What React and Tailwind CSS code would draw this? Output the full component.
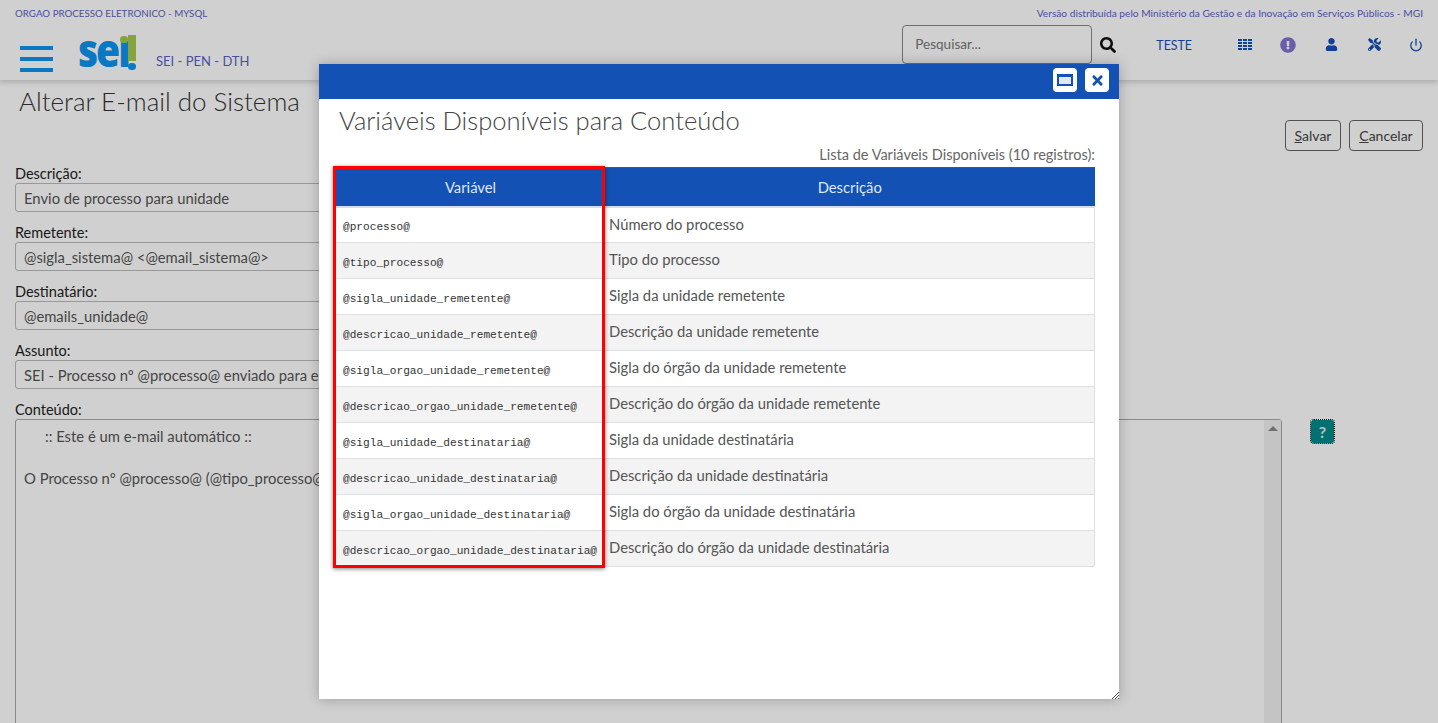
import React from 'react';
import { FaSearch, FaExclamationCircle, FaUser, FaTools, FaTimes } from 'react-icons/fa';
import { Power } from 'lucide-react';

const variaveis = [
    ['@processo@', 'Número do processo'],
    ['@tipo_processo@', 'Tipo do processo'],
    ['@sigla_unidade_remetente@', 'Sigla da unidade remetente'],
    ['@descricao_unidade_remetente@', 'Descrição da unidade remetente'],
    ['@sigla_orgao_unidade_remetente@', 'Sigla do órgão da unidade remetente'],
    ['@descricao_orgao_unidade_remetente@', 'Descrição do órgão da unidade remetente'],
    ['@sigla_unidade_destinataria@', 'Sigla da unidade destinatária'],
    ['@descricao_unidade_destinataria@', 'Descrição da unidade destinatária'],
    ['@sigla_orgao_unidade_destinataria@', 'Sigla do órgão da unidade destinatária'],
    ['@descricao_orgao_unidade_destinataria@', 'Descrição do órgão da unidade destinatária'],
];

const campos = [
    ['Descrição:', 'Envio de processo para unidade'],
    ['Remetente:', '@sigla_sistema@ <@email_sistema@>'],
    ['Destinatário:', '@emails_unidade@'],
    ['Assunto:', 'SEI - Processo nº @processo@ enviado para e'],
];

const Logo = () => (
    <div className="relative w-[56px] h-[38px] ml-[27px]">
        <span className="absolute left-[-2px] top-[-16px] origin-left scale-x-[0.85] text-[#0d93ee] text-[46px] font-black tracking-[-2.5px] leading-[60px] font-['Open_Sans',sans-serif]">seı</span>
        <span className="absolute left-[40px] top-[1px] w-[8px] h-[7px] rounded-full bg-[#a3c94f]"></span>
        <span className="absolute left-[48px] top-0 w-[8px] h-[26px] bg-[#a3c94f]"></span>
        <span className="absolute left-[48px] top-[28px] w-[8px] h-[7px] rounded-full bg-[#0d93ee]"></span>
    </div>
);

const GridIcon = () => (
    <svg width="14" height="12" viewBox="0 0 14 12" fill="#1351b4">
        {[0, 3, 6, 9].map(y => (
            <g key={y}>
                <rect x="0" y={y} width="4" height="2" />
                <rect x="5" y={y} width="4" height="2" />
                <rect x="10" y={y} width="4" height="2" />
            </g>
        ))}
    </svg>
);

const Header = () => (
    <header className="h-[80px] shadow-[0_2px_6px_rgba(0,0,0,0.2)] px-[15px] relative">
        <div className="flex justify-between pt-[7px] text-[9.75px] leading-[13px] text-[#5a62c4]">
            <span>ORGAO PROCESSO ELETRONICO - MYSQL</span>
            <span className="text-[10.2px]">Versão distribuída pelo Ministério da Gestão e da Inovação em Serviços Públicos - MGI</span>
        </div>
        <div className="flex items-start mt-[5px]">
            <div className="flex flex-col gap-[7px] w-[33px] ml-[5px] mt-[21px]">
                <span className="h-[4px] bg-[#0d93ee]"></span>
                <span className="h-[4px] bg-[#0d93ee]"></span>
                <span className="h-[4px] bg-[#0d93ee]"></span>
            </div>
            <div className="mt-[10px]">
                <Logo />
            </div>
            <span className="ml-[20px] mt-[28px] text-[13px] text-[#5a62c4] leading-[16px]">SEI - PEN - DTH</span>
            <div className="ml-auto flex items-center">
                <div className="w-[190px] h-[39px] border border-[#888] rounded-[4px] pl-[12px] flex items-center text-[13.5px] text-[#777]">Pesquisar...</div>
                <FaSearch className="ml-[8px] text-[#111] text-[16px]" />
                <span className="ml-[40px] mt-[3px] text-[12.4px] text-[#1351b4]">TESTE</span>
                <span className="ml-[46px]"><GridIcon /></span>
                <FaExclamationCircle className="ml-[28px] text-[#8373d0] text-[16px]" />
                <FaUser className="ml-[29px] text-[#1351b4] text-[13px]" />
                <FaTools className="ml-[30px] text-[#1351b4] text-[13px]" />
                <Power className="ml-[28px] text-[#1351b4]" size={14} strokeWidth={2.2} />
            </div>
        </div>
    </header>
);

const Formulario = () => (
    <main className="px-[15px]">
        <div className="flex justify-between h-[85px]">
            <h1 className="ml-[4px] mt-[6px] text-[25.95px] font-light leading-[30px] text-[#333]">Alterar E-mail do Sistema</h1>
            <div className="flex gap-[8px] mt-[40px] h-[31px]">
                <button className="w-[56px] border border-[#666] rounded-[4px] text-[14px] text-[#444]"><u>S</u>alvar</button>
                <button className="w-[74px] border border-[#666] rounded-[4px] text-[14px] text-[#444]"><u>C</u>ancelar</button>
            </div>
        </div>
        {campos.map(([rotulo, valor]) => (
            <div key={rotulo} className="h-[59px]">
                <label className="block text-[14.5px] leading-[18px] text-[#222]">{rotulo}</label>
                <div className="w-[1000px] h-[29px] border border-[#bbb] rounded-[3px] px-[8px] text-[14.8px] leading-[29px] text-[#555] whitespace-nowrap overflow-hidden">{valor}</div>
            </div>
        ))}
        <label className="block text-[14.5px] leading-[18px] text-[#222]">Conteúdo:</label>
        <div className="flex items-start">
            <div className="w-[1267px] h-[400px] border border-[#aaa] rounded-[3px] flex text-[14.8px] leading-[21px] text-[#555]">
                <div className="flex-1 px-[8px] pt-[6px]">
                    <p className="pl-[21px]">:: Este é um e-mail automático ::</p>
                    <p className="mt-[21px]">O Processo nº @processo@ (@tipo_processo@</p>
                </div>
                <div className="w-[17px] bg-[#f1f1f1] flex justify-center pt-[6px]">
                    <span className="w-0 h-0 border-x-[5px] border-x-transparent border-b-[5px] border-b-[#888]"></span>
                </div>
            </div>
            <button className="ml-[29px] mt-[1px] w-[23px] h-[23px] bg-[#008b8b] rounded-[3px] outline-1 outline-dotted outline-black text-[#e8e8e8] text-[16px] leading-none font-bold">?</button>
        </div>
    </main>
);

const TabelaVariaveis = () => (
    <div className="relative mt-[3px]">
        <table className="w-full border-collapse border-t border-[#555] text-[14.8px] text-[#555] table-fixed">
            <thead>
                <tr className="h-[39px] bg-[#1351b4] text-[#dfe8f7] border-b-2 border-[#d5dcec]">
                    <th className="w-[269px] font-normal">Variável</th>
                    <th className="font-normal">Descrição</th>
                </tr>
            </thead>
            <tbody>
                {variaveis.map(([variavel, descricao], i) => (
                    <tr key={variavel} className={`h-[36px] border-b border-[#dcdfe8] ${i % 2 === 1 ? 'bg-[#f3f3f3]' : 'bg-white'}`}>
                        <td className="pl-[7px] pt-[6px] font-['Liberation_Mono',monospace] text-[11.15px] text-[#333]">{variavel}</td>
                        <td className="pl-[4px] pb-[2px] border-r border-[#dcdfe8]">{descricao}</td>
                    </tr>
                ))}
            </tbody>
        </table>
        <div className="absolute left-[-3px] top-[-1px] w-[272px] h-[402px] border-[3px] border-[#f00] shadow-[0_1px_4px_rgba(0,0,0,0.5)] pointer-events-none"></div>
    </div>
);

const Modal = () => (
    <div className="absolute left-[319px] top-[64px] w-[800px] h-[635px] bg-white shadow-[0_0_12px_rgba(0,0,0,0.25)]">
        <div className="h-[35px] bg-[#1351b4] flex justify-end items-start gap-[8px] pt-[4px] pr-[10px]">
            <button className="w-[24px] h-[24px] bg-white rounded-[4px] flex items-center justify-center">
                <span className="w-[16px] h-[12px] border-2 border-t-[3px] border-[#1351b4] bg-[#dfe8f7]"></span>
            </button>
            <button className="w-[24px] h-[24px] bg-white rounded-[4px] flex items-center justify-center text-[#1351b4] text-[15px]">
                <FaTimes />
            </button>
        </div>
        <div className="pl-[17px] pr-[24px]">
            <h2 className="ml-[3px] mt-[6px] text-[25.55px] font-light leading-[30px] text-[#444]">Variáveis Disponíveis para Conteúdo</h2>
            <p className="mt-[11px] text-right text-[14.5px] leading-[18px] text-[#666]">Lista de Variáveis Disponíveis (10 registros):</p>
            <TabelaVariaveis />
        </div>
        <div className="absolute right-0 bottom-0 w-[8px] h-[8px] [clip-path:polygon(100%_0,100%_100%,0_100%)] bg-[repeating-linear-gradient(135deg,#444_0,#444_1px,#fff_1px,#fff_2px)]"></div>
    </div>
);

const App = () => {
    return (
        <div className="relative h-[723px] overflow-hidden bg-white font-['Lato',sans-serif]">
            <Header />
            <Formulario />
            <div className="absolute inset-0 bg-black/[0.185]"></div>
            <Modal />
        </div>
    );
};

export default App;
